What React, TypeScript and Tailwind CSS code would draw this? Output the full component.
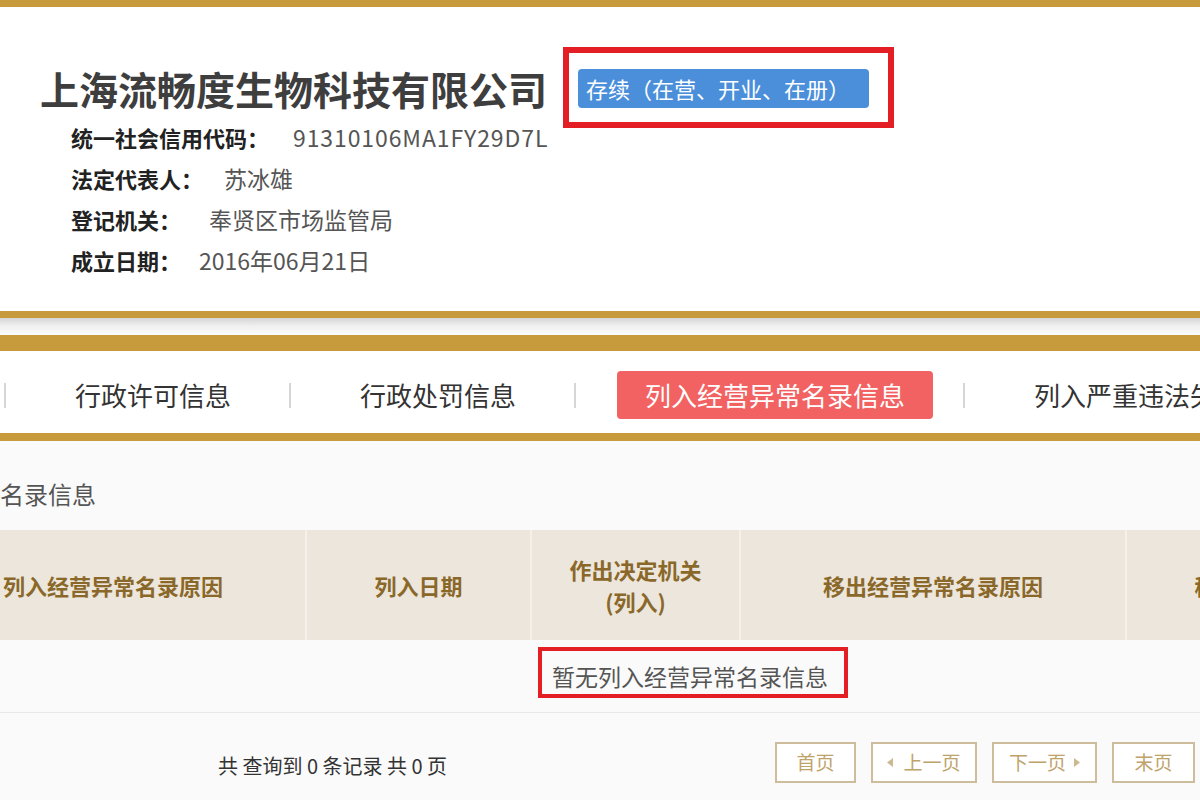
const infoRows = [
  { label: "统一社会信用代码：", value: "91310106MA1FY29D7L", gap: "ml-[24px] tracking-[0.9px]" },
  { label: "法定代表人：", value: "苏冰雄", gap: "ml-[21px]" },
  { label: "登记机关：", value: "奉贤区市场监管局", gap: "ml-[28px]" },
  { label: "成立日期：", value: "2016年06月21日", gap: "ml-[18px]" }
];

const tabs = [
  { label: "行政许可信息", active: false },
  { label: "行政处罚信息", active: false },
  { label: "列入经营异常名录信息", active: true },
  { label: "列入严重违法失信企业名单信息", active: false }
];

function TriangleLeft() {
  return (
    <svg width="6" height="9" viewBox="0 0 6 9" className="shrink-0">
      <path d="M6 0 L0 4.5 L6 9 Z" fill="#cdb98f" />
    </svg>
  );
}

function TriangleRight() {
  return (
    <svg width="6" height="9" viewBox="0 0 6 9" className="shrink-0">
      <path d="M0 0 L6 4.5 L0 9 Z" fill="#cdb98f" />
    </svg>
  );
}

export default function App() {
  return (
    <div className="h-[800px] w-[1200px] overflow-hidden bg-[#fafafa] font-['Noto_Sans_CJK_SC',sans-serif]">
      <div className="h-[7px] bg-[#c79a3c]" />

      {/* company card */}
      <section className="h-[304px] bg-white pl-[40px] pt-[57px]">
        <div className="flex h-[48px] items-center">
          <h1 className="whitespace-nowrap text-[39px] font-bold leading-[48px] text-[#3e3e3e]">
            上海流畅度生物科技有限公司
          </h1>
          <span className="relative ml-[31px] h-[39px] w-[291px] rounded-[4px] bg-[#4b8fdb] pl-[8px] text-[22px] leading-[39px] whitespace-nowrap text-white">
            存续（在营、开业、在册）
            <span className="absolute -top-[22px] -right-[25px] -bottom-[20px] -left-[15px] border-[6px] border-[#e31e24]" />
          </span>
        </div>
        <div className="mt-[5px] pl-[31px]">
          {infoRows.map((row) => (
            <div key={row.label} className="flex h-[41px] items-center whitespace-nowrap">
              <span className="text-[22px] font-bold text-[#222]">{row.label}</span>
              <span className={`${row.gap} text-[23px] text-[#555]`}>{row.value}</span>
            </div>
          ))}
        </div>
      </section>

      <div className="h-[7px] bg-[#c79a3c]" />
      <div className="h-[17px] bg-linear-to-b from-[#d6d6d6] via-[#f1f1f1] to-[#fbfbfb]" />
      <div className="h-[16px] bg-[#c79a3c]" />

      {/* tabs */}
      <nav className="flex h-[82px] items-center bg-white pt-[6px] pl-[4px] whitespace-nowrap">
        {tabs.map((tab) => (
          <div key={tab.label} className="flex shrink-0 items-center">
            <span className="h-[25px] w-[2px] bg-[#d6d6d6]" />
            <span
              className={
                tab.active
                  ? "ml-[41px] mr-[30px] h-[48px] rounded-[4px] bg-[#f36262] px-[28px] text-[26px] leading-[48px] text-white"
                  : "ml-[41px] mr-[30px] px-[28px] text-[26px] leading-[48px] text-[#333]"
              }
            >
              {tab.label}
            </span>
          </div>
        ))}
      </nav>
      <div className="h-[8px] bg-[#c79a3c]" />

      {/* section title */}
      <div className="h-[89px] pt-[37px]">
        <h2 className="ml-[-144px] whitespace-nowrap text-[24px] leading-[32px] text-[#555]">
          列入经营异常名录信息
        </h2>
      </div>

      {/* table */}
      <div className="ml-[-79px] w-[1538px]">
        <div className="flex h-[110px] bg-[#ece6dc] text-[22px] font-bold text-[#8a682a]">
          <div className="flex w-[386px] items-center justify-center border-r-2 border-[#f5f1ea]">
            列入经营异常名录原因
          </div>
          <div className="flex w-[225px] items-center justify-center border-r-2 border-[#f5f1ea]">
            列入日期
          </div>
          <div className="flex w-[209px] flex-col items-center justify-center border-r-2 border-[#f5f1ea] leading-[32px]">
            <span>作出决定机关</span>
            <span>(列入)</span>
          </div>
          <div className="flex w-[386px] items-center justify-center border-r-2 border-[#f5f1ea]">
            移出经营异常名录原因
          </div>
          <div className="flex w-[225px] items-center justify-center border-r-2 border-[#f5f1ea]">
            移出日期
          </div>
          <div className="flex-1" />
        </div>
        <div className="flex h-[73px] items-center justify-center border-b border-[#e8e8e8]">
          <span className="relative text-[23px] leading-[30px] whitespace-nowrap text-[#555]">
            暂无列入经营异常名录信息
            <span className="absolute -top-[14px] -right-[20px] -bottom-[7px] -left-[14px] border-4 border-[#e31e24]" />
          </span>
        </div>
      </div>

      {/* pagination */}
      <div className="mt-[29px] flex items-center">
        <p className="pl-[218px] pt-[6px] text-[20px] whitespace-nowrap text-[#333]">
          共 查询到 0 条记录 共 0 页
        </p>
        <div className="mr-[5px] ml-auto flex gap-[15px] text-[19px] text-[#bea36b]">
          <button className="flex h-[41px] w-[81px] items-center justify-center border-2 border-[#cdbd9c] bg-white">
            首页
          </button>
          <button className="flex h-[41px] w-[106px] items-center justify-center gap-[10px] border-2 border-[#cdbd9c] bg-white">
            <TriangleLeft />
            上一页
          </button>
          <button className="flex h-[41px] w-[105px] items-center justify-center gap-[8px] border-2 border-[#cdbd9c] bg-white">
            下一页
            <TriangleRight />
          </button>
          <button className="flex h-[41px] w-[83px] items-center justify-center border-2 border-[#cdbd9c] bg-white">
            末页
          </button>
        </div>
      </div>
    </div>
  );
}
